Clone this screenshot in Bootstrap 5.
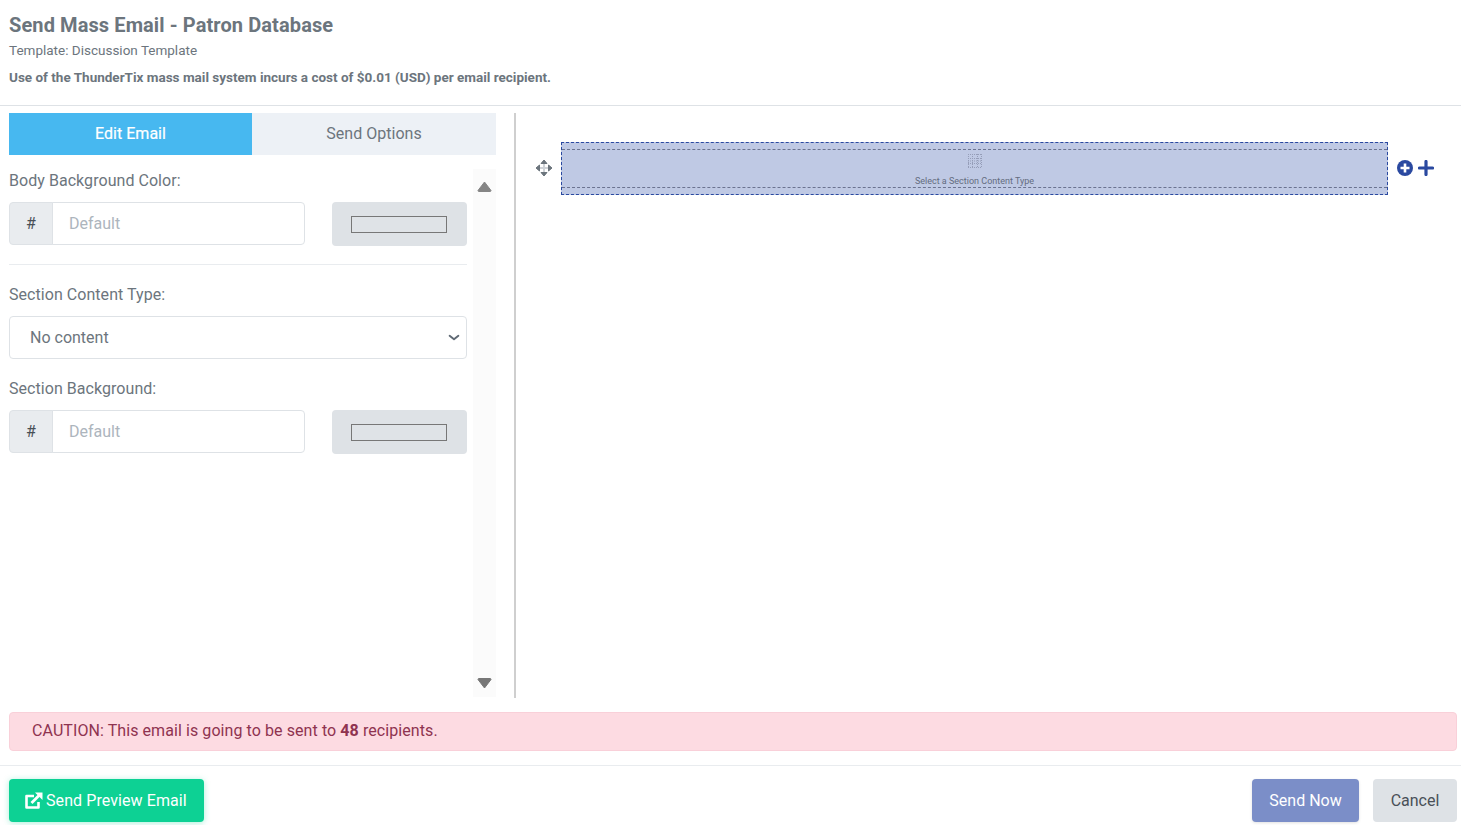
<!DOCTYPE html>
<html lang="en">
<head>
<meta charset="utf-8">
<title>Send Mass Email</title>
<link rel="stylesheet" href="https://cdn.jsdelivr.net/npm/bootstrap@5.3.0/dist/css/bootstrap.min.css">
<style>
html,body{height:825px;overflow:hidden}
body{font-family:Roboto,"Liberation Sans",sans-serif;color:#6c757d;background:#fff;font-size:16px}
.mm-head{height:106px;border-bottom:1px solid #dee2e6;padding:13px 9px 0}
.mm-title{font-size:20px;font-weight:700;line-height:24px;margin:0;color:#6c757d;letter-spacing:.1px}
.mm-sub{font-size:13.5px;line-height:21px;margin-top:3px}
.mm-note{font-size:13.5px;font-weight:700;line-height:21px;margin-top:6px}
.mm-editor{height:585px;margin-top:7px;padding-left:9px}
.mm-left{width:487px;flex:none}
.mm-tabs{height:42px}
.mm-tab{display:flex;align-items:center;justify-content:center;background:#edf1f6;color:#6c757d;border:0;padding:0;font-size:16px;border-radius:0;letter-spacing:.02px;width:244px}
.mm-tab-on{background:#47b8f0;color:#fff;width:243px;-webkit-text-stroke:.2px #fff}
.mm-scrollarea{height:543px;padding-top:14px}
.mm-form{width:458px;flex:none;margin-right:6px}
.mm-label{display:block;line-height:24px;margin:0 0 9px;color:#6c757d;letter-spacing:.05px}
.mm-form .input-group-text{width:44px;height:43px;justify-content:center;background:#e9ecef;color:#495057;border-color:#dee2e6;border-radius:4px 0 0 4px;padding:0}
.mm-form .form-control{height:43px;border-color:#dee2e6;border-radius:0 4px 4px 0;padding-left:16px;color:#6c757d;width:253px;flex:none}
.mm-form .form-control::placeholder{color:#adb5bd;opacity:1}
.mm-form .form-select{height:43px;border-color:#dee2e6;border-radius:4px;padding-left:20px;color:#6c757d;margin-bottom:18px;background-position:right 4px center;background-size:16px 14px;background-image:url("data:image/svg+xml,%3csvg xmlns='http://www.w3.org/2000/svg' viewBox='0 0 16 16'%3e%3cpath fill='none' stroke='%23606a75' stroke-linecap='round' stroke-linejoin='round' stroke-width='2.200' d='M3 5.500l5 4 5-4'/%3e%3c/svg%3e")}
.mm-swatchbtn{width:135px;height:44px;background:#dee2e6;border:0;border-radius:4px;margin-left:27px;padding:0 2px 0 0;display:flex;align-items:center;justify-content:center}
.mm-swatch{display:block;width:96px;height:17px;border:1px solid #777;background:#dfe3e7}
.mm-rule{border:0;border-top:1px solid #e9ecef;opacity:1;margin:18px 0 18px}
.mm-bar{width:23px;height:528px;background:#fbfbfb;display:flex;flex-direction:column;justify-content:space-between;align-items:center;padding:12px 0 8px}
.mm-divide{width:2px;background:#cfcfcf;margin-left:18px;flex:none}
.mm-canvas{padding:29px 0 0 19px}
.mm-row{align-items:center}
.mm-move{width:26px;flex:none;margin-bottom:1px}
.mm-section{width:827px;height:53px;border:1px dashed #2a49a0;background:#bfc9e4;flex:none;padding:6px 0}
.mm-inner{height:39px;border-top:1px dashed #6b7390;border-bottom:1px dashed #6b7390;display:flex;flex-direction:column;align-items:center;color:#646c80;font-size:9px;line-height:11px;padding-top:4px}
.mm-inner span{margin-top:8px;white-space:nowrap}
.mm-tools{margin-left:9px;gap:5px;margin-bottom:1px}
.mm-alert{margin:14px 4px 0 9px;height:39px;padding:0 22px 2px;background:#fddbe2;border:1px solid #f9d0d9;color:#8f3350;border-radius:4px;display:flex;align-items:center;letter-spacing:.08px}
.mm-alert b{font-weight:700}
.mm-foot{margin-top:14px;border-top:1px solid #e9ecef;padding:13px 4px 0 9px}
.mm-btn{height:43px;border:0;border-radius:4px;font-size:16px;padding:0 17px;display:flex;align-items:center;box-shadow:0 1px 3px rgba(0,0,0,.12)}
.mm-green{width:195px;background:#0dd194;color:#fff;gap:3px;padding:0 16px;box-shadow:0 1px 6px rgba(13,209,148,.35);letter-spacing:.08px}
.mm-send{background:#7b8ec8;color:#fff;width:107px;justify-content:center;padding:0}
.mm-cancel{background:#dee2e6;color:#495057;width:84px;justify-content:center;padding:0;margin-left:14px;box-shadow:none}
</style>
</head>
<body>
<div class="mm-head">
  <h1 class="mm-title">Send Mass Email - Patron Database</h1>
  <div class="mm-sub">Template: Discussion Template</div>
  <div class="mm-note">Use of the ThunderTix mass mail system incurs a cost of $0.01 (USD) per email recipient.</div>
</div>
<div class="mm-editor d-flex">
  <div class="mm-left">
    <div class="mm-tabs d-flex">
      <button type="button" class="mm-tab mm-tab-on">Edit Email</button>
      <button type="button" class="mm-tab">Send Options</button>
    </div>
    <div class="mm-scrollarea d-flex">
      <div class="mm-form">
        <label class="mm-label">Body Background Color:</label>
        <div class="d-flex">
          <div class="input-group flex-nowrap w-auto">
            <span class="input-group-text">#</span>
            <input class="form-control" placeholder="Default">
          </div>
          <button type="button" class="mm-swatchbtn"><span class="mm-swatch"></span></button>
        </div>
        <hr class="mm-rule">
        <label class="mm-label">Section Content Type:</label>
        <select class="form-select"><option>No content</option></select>
        <label class="mm-label">Section Background:</label>
        <div class="d-flex">
          <div class="input-group flex-nowrap w-auto">
            <span class="input-group-text">#</span>
            <input class="form-control" placeholder="Default">
          </div>
          <button type="button" class="mm-swatchbtn"><span class="mm-swatch"></span></button>
        </div>
      </div>
      <div class="mm-bar">
        <svg width="15" height="11" viewBox="0 0 15 11"><path d="M7.5 1 L14 9.5 Q14 10.500 13 10.500 H2 Q1 10.500 1 9.500Z" fill="#858585" stroke="#858585" stroke-linejoin="round"/></svg>
        <svg width="15" height="11" viewBox="0 0 15 11"><path d="M7.5 10 L14 1.500 Q14 .5 13 .5 H2 Q1 .5 1 1.500Z" fill="#777" stroke="#777" stroke-linejoin="round"/></svg>
      </div>
    </div>
  </div>
  <div class="mm-divide"></div>
  <div class="mm-canvas flex-grow-1">
    <div class="mm-row d-flex">
      <svg class="mm-move" width="26" height="18" viewBox="0 0 26 18">
        <path d="M9 4v10M4 9h10" stroke="#cfd3d8" stroke-width="2" fill="none"/>
        <path d="M9 1 12 4.500H6ZM9 17 12 13.500H6ZM1 9 4.500 6V12ZM17 9 13.500 6V12Z" fill="#6c757d" stroke="#6c757d" stroke-width="1" stroke-linejoin="round"/>
      </svg>
      <div class="mm-section">
        <div class="mm-inner">
          <svg width="14" height="14" viewBox="0 0 14 14">
            <path d="M0 .5h14M0 4.500h14M0 9.500h14M0 13.500h14" fill="none" stroke="#959db8" stroke-width="1" stroke-dasharray="1 1"/>
            <path d="M.5 0v14M4.500 0v14M9.500 0v14M13.500 0v14M0 7h14" fill="none" stroke="#959db8" stroke-width="1" stroke-dasharray="1 1"/>
          </svg>
          <span>Select a Section Content Type</span>
        </div>
      </div>
      <div class="mm-tools d-flex align-items-center">
        <svg width="16" height="16" viewBox="0 0 16 16"><circle cx="8" cy="8" r="8" fill="#2a49a0"/><path d="M8 3.500v9M3.500 8h9" stroke="#fff" stroke-width="2.600"/></svg>
        <svg width="16" height="16" viewBox="0 0 16 16"><path d="M8 1.500v13M1.500 8h13" stroke="#2a49a0" stroke-width="3.200" stroke-linecap="round"/></svg>
      </div>
    </div>
  </div>
</div>
<div class="mm-alert">
  <span>CAUTION: This email is going to be sent to <b>48</b> recipients.</span>
</div>
<div class="mm-foot d-flex justify-content-between">
  <button type="button" class="mm-btn mm-green">
    <svg width="18" height="17" viewBox="0 0 18 17" fill="none" stroke="#fff"><path d="M13.500 10v5.500H1.500V4H9" stroke-width="2.600" stroke-linejoin="round"/><path d="M6.500 11 14.500 3" stroke-width="2.800"/><path d="M10 .5h7.500V8z" fill="#fff" stroke="none"/></svg>
    <span>Send Preview Email</span>
  </button>
  <div class="d-flex">
    <button type="button" class="mm-btn mm-send">Send Now</button>
    <button type="button" class="mm-btn mm-cancel">Cancel</button>
  </div>
</div>
<script src="https://cdn.jsdelivr.net/npm/bootstrap@5.3.0/dist/js/bootstrap.bundle.min.js"></script>
</body>
</html>
